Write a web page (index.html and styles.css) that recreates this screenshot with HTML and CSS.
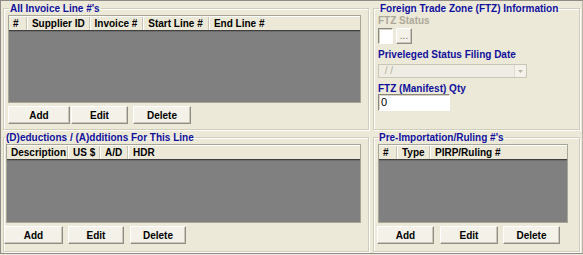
FILE: index.html
```html
<!DOCTYPE html>
<html>
<head>
<meta charset="utf-8">
<link rel="stylesheet" href="styles.css">
</head>
<body>
<div class="frame">
  <fieldset class="group g-inv">
    <legend>AII Invoice Line #'s</legend>
    <div class="list list-inv">
      <div class="list-head">
        <span class="col c-inv-num">#</span>
        <span class="col c-inv-sup">Supplier ID</span>
        <span class="col c-inv-inv">Invoice #</span>
        <span class="col c-inv-start">Start Line #</span>
        <span class="col c-inv-end">End Line #</span>
      </div>
      <div class="list-body"></div>
    </div>
    <div class="btns btns-inv">
      <button class="btn b-add">Add</button>
      <button class="btn b-edit">Edit</button>
      <button class="btn b-del">Delete</button>
    </div>
  </fieldset>

  <fieldset class="group g-ftz">
    <legend>Foreign Trade Zone (FTZ) Information</legend>
    <div class="label label-disabled">FTZ Status</div>
    <div class="ftz-row">
      <div class="box box-status"></div>
      <button class="btn btn-dots">...</button>
    </div>
    <div class="label">Priveleged Status Filing Date</div>
    <div class="combo">
      <span class="combo-text">&nbsp;/ /</span>
      <span class="combo-arrow">
        <svg width="5" height="3" viewBox="0 0 5 3"><path d="M0 0H5L2.5 3Z" fill="#B8B5A8"/></svg>
      </span>
    </div>
    <div class="label">FTZ (Manifest) Qty</div>
    <div class="box box-qty">0</div>
  </fieldset>

  <fieldset class="group g-ded">
    <legend>(D)eductions / (A)dditions For This Line</legend>
    <div class="list list-ded">
      <div class="list-head">
        <span class="col c-ded-desc">Description</span>
        <span class="col c-ded-us">US $</span>
        <span class="col c-ded-ad">A/D</span>
        <span class="col c-ded-hdr">HDR</span>
      </div>
      <div class="list-body"></div>
    </div>
    <div class="btns btns-ded">
      <button class="btn b-add">Add</button>
      <button class="btn b-edit">Edit</button>
      <button class="btn b-del">Delete</button>
    </div>
  </fieldset>

  <fieldset class="group g-pre">
    <legend>Pre-Importation/Ruling #'s</legend>
    <div class="list list-pre">
      <div class="list-head">
        <span class="col c-pre-num">#</span>
        <span class="col c-pre-type">Type</span>
        <span class="col c-pre-pirp">PIRP/Ruling #</span>
      </div>
      <div class="list-body"></div>
    </div>
    <div class="btns btns-pre">
      <button class="btn b-add">Add</button>
      <button class="btn b-edit">Edit</button>
      <button class="btn b-del">Delete</button>
    </div>
  </fieldset>
</div>
</body>
</html>
```

FILE: styles.css
```css
* { box-sizing: border-box; }
html, body { margin: 0; padding: 0; background: #ECE9D8; }
body {
  font-family: "Liberation Sans", Arial, sans-serif;
  font-size: 10px;
  font-weight: bold;
  color: #000;
}
.frame {
  width: 583px;
  height: 254px;
  border: 1px solid #8E8C84;
  border-right-color: #B8B5A8;
  background: #ECE9D8;
  padding: 1px 3px 0 2px;
  display: grid;
  grid-template-columns: 366px 207px;
  grid-template-rows: 128px 121px;
  column-gap: 4px;
  row-gap: 1px;
}
.group {
  margin: 0;
  min-width: 0;
  border: 1px solid #D0CDBE;
  box-shadow: inset 1px 1px 0 #FFFFFF, 1px 1px 0 #FFFFFF;
  padding: 0 4px 0 4px;
}
.group legend {
  color: #10109C;
  padding: 0 1px;
  margin-left: 1px;
  line-height: 13px;
  font-size: 10px;
}
.g-ded { padding-left: 0; }
.g-pre { padding-left: 3px; }

/* list view */
.list {
  border: 1px solid #A7A596;
  background: #808080;
  margin-top: 0;
}
.list-inv { width: 353px; }
.list-ded { width: 355px; margin-left: 2px; }
.list-pre { width: 190px; margin-left: 1px; }
.list-head {
  display: flex;
  height: 14px;
  background: #ECE9D8;
  border-top: 1px solid #FFFFFF;
  box-shadow: 0 1px 0 #404040, 0 2px 0 #6E6E6E;
  position: relative;
  z-index: 1;
}
.col {
  display: block;
  height: 13px;
  line-height: 13px;
  padding-left: 4px;
  white-space: nowrap;
  overflow: hidden;
  border-right: 1px solid #C7C4B5;
  box-shadow: 1px 0 0 #FFFFFF;
  margin-right: 1px;
}
.c-inv-num { width: 18px; }
.c-inv-sup { width: 62px; }
.c-inv-inv { width: 53px; }
.c-inv-start { width: 65px; }
.c-inv-end { width: 150px; border-right: none; box-shadow: none; }
.c-ded-desc { width: 61px; }
.c-ded-us { width: 31px; }
.c-ded-ad { width: 27px; }
.c-ded-hdr { width: 150px; border-right: none; box-shadow: none; }
.c-pre-num { width: 18px; }
.c-pre-type { width: 32px; }
.c-pre-pirp { width: 120px; border-right: none; box-shadow: none; }
.list-inv .list-body { height: 72px; }
.list-ded .list-body,
.list-pre .list-body { height: 63px; }

/* buttons */
.btns { display: flex; margin-top: 3px; }
.btn {
  font: inherit;
  font-weight: bold;
  color: #000;
  height: 18px;
  padding: 0;
  margin: 0;
  background: #F3F1E8;
  border: 1px solid;
  border-color: #FFFFFF #8F8D84 #8F8D84 #FFFFFF;
  box-shadow: inset -1px -1px 0 #CAC7B9;
  line-height: 15px;
  text-align: center;
}
.btns-inv .b-add { width: 62px; }
.btns-inv .b-edit { width: 57px; margin-left: 1px; }
.btns-inv .b-del { width: 58px; margin-left: 5px; }
.btns-ded .b-add { width: 59px; }
.btns-ded .b-edit { width: 56px; margin-left: 5px; }
.btns-ded .b-del { width: 56px; margin-left: 6px; }
.btns-pre .b-add { width: 57px; }
.btns-pre .b-edit { width: 58px; margin-left: 6px; }
.btns-pre .b-del { width: 57px; margin-left: 5px; }

/* FTZ panel */
.label {
  color: #10109C;
  line-height: 12px;
  margin-top: 1px;
}
.label-disabled { color: #ACA899; margin-top: 0; }
.ftz-row { display: flex; align-items: flex-start; margin-top: 1px; margin-bottom: 5px; }
.box {
  background: #FFFFFF;
  border: 1px solid;
  border-color: #8A887E #FFFFFF #FFFFFF #8A887E;
  box-shadow: inset 1px 1px 0 #D6D3C5;
  font-weight: normal;
  font-family: "Liberation Sans", Arial, sans-serif;
  font-size: 11px;
}
.box-status { width: 15px; height: 16px; }
.btn-dots { width: 16px; height: 16px; margin-left: 3px; line-height: 12px; font-weight: normal; color: #6E6C64; }
.combo {
  width: 149px;
  height: 14px;
  margin-top: 3px;
  margin-bottom: 5px;
  display: flex;
  justify-content: space-between;
  background: #EFEDE3;
  border: 1px solid #C9C6B7;
}
.combo-text { color: #B0AD9F; font-weight: normal; font-size: 10px; line-height: 12px; padding-left: 3px; }
.combo-arrow {
  width: 12px;
  height: 12px;
  background: #F4F2EA;
  border-left: 1px solid #DDDBD0;
  display: flex;
  align-items: center;
  justify-content: center;
}
.box-qty { width: 72px; height: 17px; margin-top: -1px; line-height: 15px; padding-left: 2px; }
```
